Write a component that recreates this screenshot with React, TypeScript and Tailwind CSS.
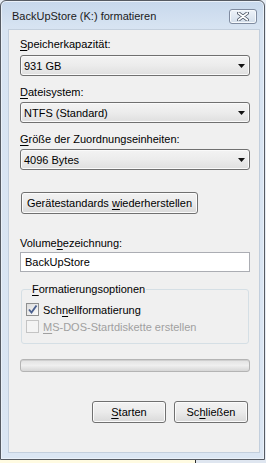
import { ReactNode } from "react";
import { clsx } from "clsx";

const font = "font-['Liberation_Sans',Arial,sans-serif] text-[11px] text-black";

// access key underline, like the Windows dialog draws it
function K({ children }: { children: ReactNode }) {
  return <span className="underline decoration-[1px] underline-offset-[2px]">{children}</span>;
}

function Label({ children, className }: { children: ReactNode; className?: string }) {
  return <div className={clsx("leading-[14px]", className)}>{children}</div>;
}

function Combo({ value, className }: { value: string; className?: string }) {
  return (
    <div
      className={clsx(
        "flex h-[21px] w-[230px] items-center justify-between rounded-[3px] border border-[#707070] bg-gradient-to-b from-[#f3f3f3] via-[#ececec] to-[#dfdfdf] pl-[3px] pr-[4px] leading-[14px] shadow-[inset_0_0_0_1px_#fafafa]",
        className
      )}
    >
      <span>{value}</span>
      <svg width="7" height="4" viewBox="0 0 7 4">
        <path d="M0 0h7L3.5 4z" fill="#111" />
      </svg>
    </div>
  );
}

function PushButton({ children, className }: { children: ReactNode; className?: string }) {
  return (
    <div
      className={clsx(
        "flex h-[22px] items-center justify-center rounded-[3px] border border-[#707070] bg-gradient-to-b from-[#f2f2f2] via-[#ebebeb] to-[#d9d9d9] leading-[14px] shadow-[inset_0_0_0_1px_#fbfbfb]",
        className
      )}
    >
      {children}
    </div>
  );
}

function CheckBox({ checked, disabled }: { checked?: boolean; disabled?: boolean }) {
  return (
    <div
      className={clsx(
        "flex h-[13px] w-[13px] items-center justify-center border",
        disabled
          ? "border-[#c4c4c4] bg-[#f4f4f4]"
          : "border-[#8e8f8f] bg-gradient-to-br from-[#dcdcdc] to-[#fbfbfb]"
      )}
    >
      {checked && (
        <svg width="11" height="11" viewBox="0 0 11 11">
          <path d="M2 5.5 L4.5 8.5 L9.5 1.5" fill="none" stroke="#4a5f8e" strokeWidth="1.9" />
        </svg>
      )}
    </div>
  );
}

export default function App() {
  return (
    <div className={clsx("h-[463px] w-[266px] bg-[#e6ecf4]", font)}>
      <div className="flex h-[460px] w-[265px] flex-col rounded-t-[6px] border border-[#565b63] bg-[linear-gradient(to_bottom,#c7d8ec_0px,#d8e4f2_28px,#dbe6f3_100%)] pl-[7px] pr-[4px] pb-[6px] shadow-[inset_0_0_0_1px_#eaf1f9]">
        {/* title bar */}
        <div className="flex h-[28px] items-start justify-between pl-[4px] pr-[3px]">
          <span className="mt-[8px] leading-[14px] text-[#1b1b1b]">BackUpStore (K:) formatieren</span>
          <div className="mt-[8px] flex h-[15px] w-[28px] items-center justify-center rounded-[3px] border border-[#7f8ba0] bg-gradient-to-b from-[#eef3f9] to-[#d3deeb] shadow-[inset_0_0_0_1px_#f6f9fc]">
            <svg width="12" height="9" viewBox="0 0 12 9">
              <path d="M1.5 1 L10.5 8 M10.5 1 L1.5 8" stroke="#4b5565" strokeWidth="3.4" strokeLinecap="round" />
              <path d="M1.5 1 L10.5 8 M10.5 1 L1.5 8" stroke="#ffffff" strokeWidth="1.6" strokeLinecap="round" />
            </svg>
          </div>
        </div>

        {/* client area */}
        <div className="flex h-[424px] w-[252px] flex-col border border-[#c3cfdd] bg-[#f0f0f0] pl-[11px] pr-[9px] pt-[7px]">
          <Label>
            <K>S</K>peicherkapazität:
          </Label>
          <Combo value="931 GB" className="mt-[4px]" />

          <Label className="mt-[9px]">
            <K>D</K>ateisystem:
          </Label>
          <Combo value="NTFS (Standard)" className="mt-[3px]" />

          <Label className="mt-[9px]">
            <K>G</K>röße der Zuordnungseinheiten:
          </Label>
          <Combo value="4096 Bytes" className="mt-[3px]" />

          <PushButton className="ml-[1px] mt-[22px] w-[177px]">
            Gerätestandards&nbsp;<K>w</K>iederherstellen
          </PushButton>

          <Label className="mt-[22px]">
            Volume<K>b</K>ezeichnung:
          </Label>
          <div className="mt-[2px] flex h-[20px] w-[230px] items-center border border-[#abadb3] bg-white pl-[4px] leading-[14px]">
            BackUpStore
          </div>

          <fieldset className="ml-[1px] mt-[10px] w-[228px] rounded-[3px] border border-[#d5dfe5] pb-[8px] pl-[4px] pt-[5px]">
            <legend className="ml-[5px] px-[1px] leading-[14px]">
              <K>F</K>ormatierungsoptionen
            </legend>
            <div className="flex h-[17px] items-center gap-[4px]">
              <CheckBox checked />
              <span className="leading-[14px]">
                Sch<K>n</K>ellformatierung
              </span>
            </div>
            <div className="flex h-[17px] items-center gap-[4px] text-[#a0a0a0]">
              <CheckBox disabled />
              <span className="leading-[14px]">
                <K>M</K>S-DOS-Startdiskette erstellen
              </span>
            </div>
          </fieldset>

          <div className="mt-[15px] h-[13px] w-[230px] rounded-[3px] border border-[#b4b4b4] bg-gradient-to-b from-[#e2e2e2] via-[#efefef] to-[#d6d6d6] shadow-[inset_0_1px_0_#cfcfcf]" />

          <div className="mr-[2px] mt-[29px] flex justify-end gap-[8px]">
            <PushButton className="w-[74px]">
              <K>S</K>tarten
            </PushButton>
            <PushButton className="w-[74px]">
              Sc<K>h</K>ließen
            </PushButton>
          </div>
        </div>
      </div>

      {/* what shows of the window below */}
      <div className="flex h-[3px]">
        <div className="w-[195px] bg-[#fffbe2]" />
        <div className="w-[1px] bg-[#2f2f2f]" />
        <div className="flex-1 bg-[#dfe6f0]" />
      </div>
    </div>
  );
}
